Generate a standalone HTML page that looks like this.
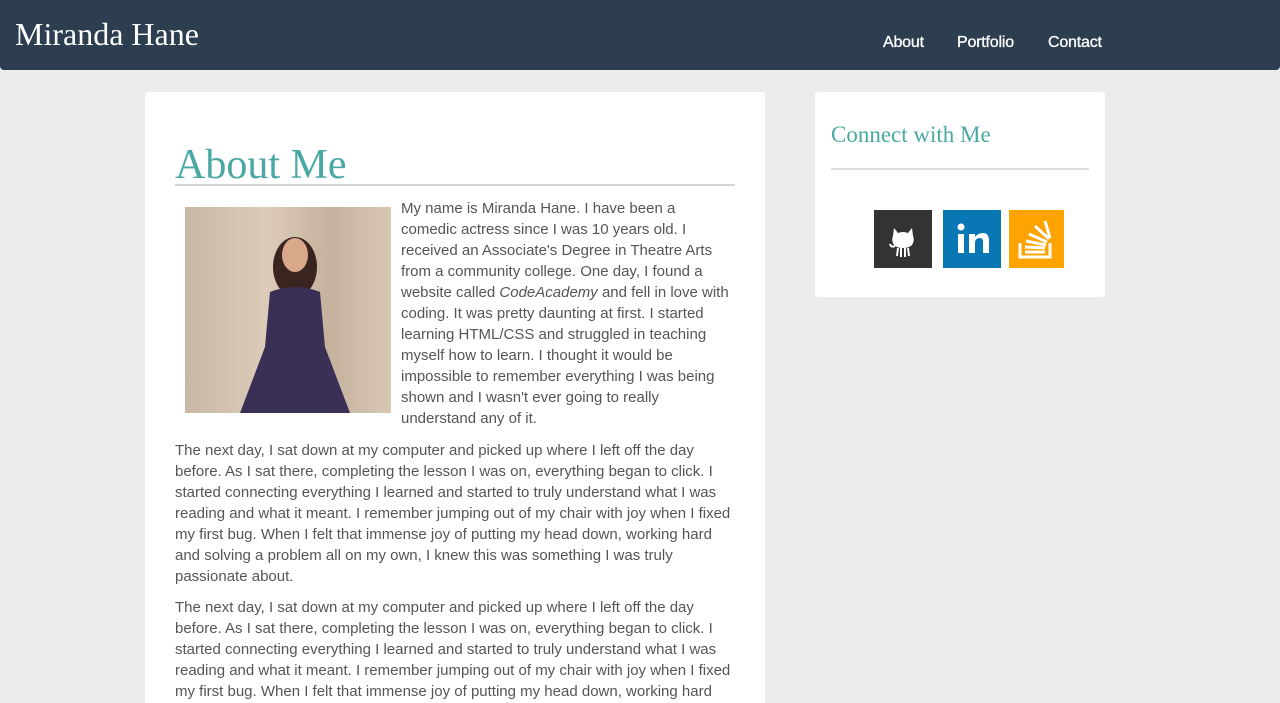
<!DOCTYPE html>
<html><head><meta charset="utf-8"><style>
*{margin:0;padding:0;box-sizing:border-box}
html,body{width:1280px;height:703px;overflow:hidden}
body{background:#ececec;font-family:"Liberation Sans",sans-serif;position:relative}
.hdr{position:absolute;left:0;top:0;width:1280px;height:70px;background:#2d3e50;border-radius:0 0 4px 4px}
.hdr h1{position:absolute;left:15px;top:16px;font-family:"Liberation Serif",serif;font-weight:normal;color:#fff;font-size:32px}
.nav a{position:absolute;top:34px;color:#fff;font-size:16px;text-decoration:none;letter-spacing:-0.2px;-webkit-text-stroke:0.3px #fff}
.main{position:absolute;left:145px;top:92px;width:620px;height:611px;background:#fff;border-radius:3px 3px 0 0;overflow:hidden}
.main h2{position:absolute;left:30px;top:49px;font-family:"Liberation Serif",serif;font-weight:normal;color:#4aa8a4;font-size:42px}
.rule{position:absolute;left:30px;top:92px;width:560px;height:2px;background:#d4d4d4}
.img{position:absolute;left:40px;top:115px;width:206px;height:206px;background:linear-gradient(90deg,#c9b8a6,#dccbb8 40%,#c4b29e 70%,#d8c7b2)}
.txt{position:absolute;color:#555;font-size:15px;line-height:21px}
.side{position:absolute;left:815px;top:92px;width:290px;height:205px;background:#fff;border-radius:3px}
.side h3{position:absolute;left:16px;top:30px;font-family:"Liberation Serif",serif;font-weight:normal;color:#4aa8a4;font-size:23px}
.side .r{position:absolute;left:16px;top:76px;width:258px;height:2px;background:#ddd}
.ic{position:absolute;top:118px;width:58px;height:58px}
</style></head><body>
<div class="hdr"><h1>Miranda Hane</h1>
<div class="nav"><a style="left:883px">About</a><a style="left:957px">Portfolio</a><a style="left:1048px">Contact</a></div></div>
<div class="main">
<h2>About Me</h2><div class="rule"></div>
<div class="img"><svg width="206" height="206"><ellipse cx="110" cy="60" rx="22" ry="30" fill="#3a2420"/><ellipse cx="110" cy="48" rx="13" ry="17" fill="#d9a88a"/><path d="M85 85 Q110 75 135 85 L140 140 L165 206 L55 206 L80 140Z" fill="#3a2f55"/></svg></div>
<div class="txt" style="left:256px;top:106px;width:330px">My name is Miranda Hane. I have been a comedic actress since I was 10 years old. I received an Associate's Degree in Theatre Arts from a community college. One day, I found a website called <i>CodeAcademy</i> and fell in love with coding. It was pretty daunting at first. I started learning HTML/CSS and struggled in teaching myself how to learn. I thought it would be impossible to remember everything I was being shown and I wasn't ever going to really understand any of it.</div>
<div class="txt" style="left:30px;top:348px;width:560px">The next day, I sat down at my computer and picked up where I left off the day before. As I sat there, completing the lesson I was on, everything began to click. I started connecting everything I learned and started to truly understand what I was reading and what it meant. I remember jumping out of my chair with joy when I fixed my first bug. When I felt that immense joy of putting my head down, working hard and solving a problem all on my own, I knew this was something I was truly passionate about.</div>
<div class="txt" style="left:30px;top:505px;width:560px">The next day, I sat down at my computer and picked up where I left off the day before. As I sat there, completing the lesson I was on, everything began to click. I started connecting everything I learned and started to truly understand what I was reading and what it meant. I remember jumping out of my chair with joy when I fixed my first bug. When I felt that immense joy of putting my head down, working hard and solving a problem all on my own, I knew this was something I was truly passionate about.</div>
</div>
<div class="side"><h3>Connect with Me</h3><div class="r"></div>
<svg class="ic" style="left:59px" viewBox="0 0 58 58"><rect width="58" height="58" fill="#333"/><path d="M20 18 L24 23 Q29 21 34 23 L38 18 L39 26 Q41 30 38 35 Q35 38 29 38 Q23 38 20 35 Q17 30 19 26Z" fill="#fff"/><path d="M24 38 L23 46 M27 38 L27 47 M31 38 L31 47 M34 38 L35 46 M21 36 Q17 38 16 34" stroke="#fff" stroke-width="2" fill="none"/></svg>
<svg class="ic" style="left:128px" viewBox="0 0 58 58"><rect width="58" height="58" fill="#0a77b5"/><rect x="15" y="24" width="6" height="19" fill="#fff"/><circle cx="18" cy="17" r="3.5" fill="#fff"/><path d="M26 24h6v3q3-4 8-4q6 0 6 8v12h-6V32q0-4-3-4q-5 0-5 5v10h-6z" fill="#fff"/></svg>
<svg class="ic" style="left:194px;width:55px" viewBox="0 0 55 58"><rect width="55" height="58" fill="#fea300"/><path d="M11 33v14h30V33" stroke="#fff" stroke-width="3" fill="none"/><path d="M16 42h20M16 37l20 1M17 31l20 4M20 24l18 8M26 16l14 13M36 11l5 17" stroke="#fff" stroke-width="3"/></svg>
</div>
</body></html>
